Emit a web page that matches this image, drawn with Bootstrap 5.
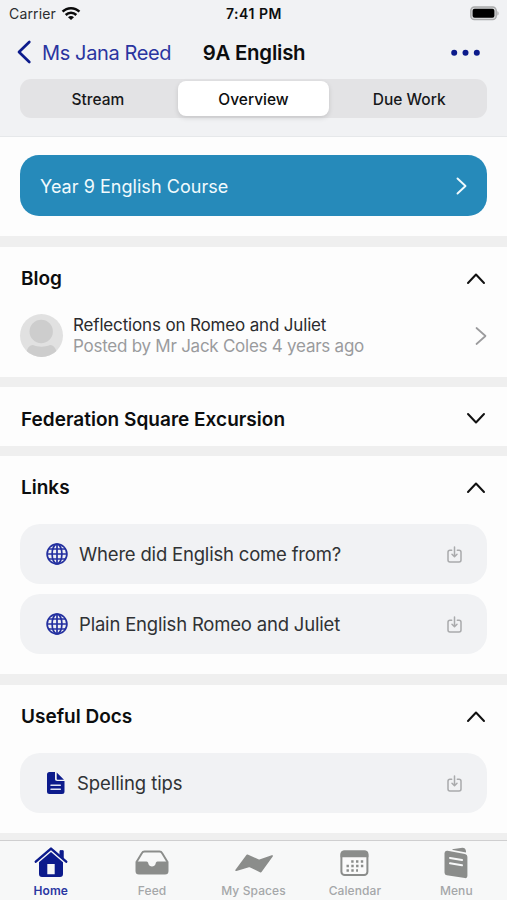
<!DOCTYPE html>
<html lang="en">
<head>
<meta charset="utf-8">
<meta name="viewport" content="width=device-width, initial-scale=1">
<title>9A English</title>
<link href="https://cdn.jsdelivr.net/npm/bootstrap@5.3.0/dist/css/bootstrap.min.css" rel="stylesheet">
<style>
  body { font-family: Inter, "Liberation Sans", sans-serif; background: #efefef; color: #0c0d0e; height: 900px; overflow: hidden; }
  svg { display: block; flex: none; overflow: visible; }
  .app-head { background: #f1f2f4; height: 137px; border-bottom: 1px solid #e6e8ea; }
  .status { height: 28px; padding: 0 8px 0 9px; font-size: 14px; line-height: 28px; }
  .status > div { flex: 1 1 0; }
  .carrier { letter-spacing: .15px; color: #2c2d30; }
  .wifi { margin-left: 5px; }
  .clock { font-weight: 600; letter-spacing: .55px; }
  .titlebar { height: 49px; padding: 0 17px; }
  .titlebar > .side { flex: 1 1 0; }
  .more { padding-right: 10px; }
  .back { color: #2a35a0; font-size: 20px; letter-spacing: -.38px; gap: 11px; }
  .title { font-size: 20.4px; font-weight: 600; letter-spacing: -.22px; margin: 0 4px 0 15px; padding-top: 1px; }
  .segment { display: grid; grid-template-columns: repeat(3, 1fr); height: 39px; margin: 2px 20px 0; border-radius: 11px; background: #e3e3e5; padding: 2px 0; font-size: 15.5px; font-weight: 500; }
  .segment .nav-link { color: #17181a; padding: 1px 0 0; line-height: 35px; border-radius: 8px; text-align: center; }
  .segment .nav-link.active { background: #fff; color: #0c0d0e; box-shadow: 0 2px 5px rgba(0,0,0,.13); margin: 0 2px; height: 35px; }
  .panel { background: #fdfdfd; padding: 0 20px; margin-bottom: 11px; }
  .course { height: 61px; margin-top: 18px; border-radius: 19px; background: #268aba; color: #f1fafd; font-size: 18px; letter-spacing: .04px; padding: 0 20px; }
  .course span { padding-top: 1px; }
  .course-panel { height: 99px; overflow: hidden; }
  .blog-panel { height: 130px; margin-bottom: 10px; }
  .fed-panel { height: 59px; margin-bottom: 10px; }
  .links-panel { height: 218px; }
  .docs-panel { height: 148px; margin-bottom: 7px; }
  .sec-head { height: 63px; padding: 0 2px 0 1px; }
  .sec-head h2 { font-size: 19px; font-weight: 600; margin: 0; padding-top: 2px; }
  .fed-panel h2 { padding-top: 3px; letter-spacing: .02px; }
  .post { height: 51px; gap: 10px; padding-right: 1px; }
  .post-text { font-size: 17px; line-height: 21px; color: #2a2b2d; letter-spacing: -.16px; }
  .post-by { color: #9a9b9d; letter-spacing: -.25px; }
  .item { height: 60px; border-radius: 20px; background: #f1f2f4; padding: 0 25px; font-size: 18.5px; color: #303235; gap: 11px; letter-spacing: -.19px; }
  .item + .item { margin-top: 10px; }
  .item span { padding-top: 2px; }
  .links-panel .sec-head, .docs-panel .sec-head { margin-bottom: 5px; }
  .item-doc { gap: 12px; letter-spacing: -.08px; }
  .tabs { height: 60px; background: #f7f8f8; border-top: 1px solid #cfcfd0; font-size: 12px; font-weight: 500; color: #a5a7a9; letter-spacing: .1px; }
  .tabs .tab { flex: 1 1 0; color: inherit; }
  .tabs .tab.active { color: #2b37a2; font-weight: 600; }
  .tab-icon { height: 40px; padding-top: 5px; }
  .tab-label { line-height: 20px; }
</style>
</head>
<body>
<header class="app-head">
  <div class="status d-flex align-items-center">
    <div class="d-flex align-items-center">
      <span class="carrier">Carrier</span>
      <svg class="wifi" width="20" height="14" viewBox="0 0 20 14"><g fill="none" stroke="#0a0a0a" stroke-width="2.500"><path d="M1.600 4.700C6.200.1 13.800.1 18.400 4.700"/><path d="M4.700 8c3-3 7.600-3 10.600 0"/></g><path d="M10 13 7 10.200c1.700-1.600 4.300-1.600 6 0z" fill="#0a0a0a"/></svg>
    </div>
    <div class="clock text-center">7:41 PM</div>
    <div class="d-flex justify-content-end">
      <svg width="29" height="14" viewBox="0 0 29 14"><rect x=".8" y="0" width="25.400" height="12.600" rx="3.600" fill="#d6d7d8" stroke="#a9aaab" stroke-width="1.400"/><rect x="2.600" y="1.800" width="21.800" height="9" rx="2" fill="#000"/><path d="M27.400 4.200v4.200c1.600-.5 1.600-3.700 0-4.200z" fill="#a9aaab"/></svg>
    </div>
  </div>
  <div class="titlebar d-flex align-items-center">
    <a class="side back d-flex align-items-center text-decoration-none text-nowrap" href="#">
      <svg width="14" height="23" viewBox="0 0 14 23"><path d="M12.300 1 2 11l10.300 10" fill="none" stroke="#0c1b8c" stroke-width="2.700" stroke-linecap="round" stroke-linejoin="round"/></svg>
      <span>Ms Jana Reed</span>
    </a>
    <div class="title text-nowrap">9A English</div>
    <div class="side more d-flex justify-content-end">
      <svg width="29" height="6" viewBox="0 0 29 6" fill="#0c1b8c"><circle cx="3.200" cy="2.800" r="3"/><circle cx="14.500" cy="2.800" r="3"/><circle cx="25.800" cy="2.800" r="3"/></svg>
    </div>
  </div>
  <nav class="segment">
    <a class="nav-link" href="#">Stream</a>
    <a class="nav-link active" href="#">Overview</a>
    <a class="nav-link" href="#">Due Work</a>
  </nav>
</header>

<main>
  <section class="panel course-panel">
    <div class="course d-flex align-items-center justify-content-between">
      <span>Year 9 English Course</span>
      <svg width="11" height="18" viewBox="0 0 11 18"><path d="m1.500 1.500 8 7.500-8 7.500" fill="none" stroke="#f1fafd" stroke-width="1.900" stroke-linecap="round" stroke-linejoin="round"/></svg>
    </div>
  </section>

  <section class="panel blog-panel">
    <div class="sec-head d-flex align-items-center justify-content-between">
      <h2>Blog</h2>
      <svg width="18" height="11" viewBox="0 0 18 11"><path d="m1 10 8-8.500 8 8.500" fill="none" stroke="#111" stroke-width="2" stroke-linecap="round" stroke-linejoin="round"/></svg>
    </div>
    <div class="post d-flex align-items-center">
      <svg width="43" height="43" viewBox="0 0 43 43"><defs><clipPath id="av"><circle cx="21.500" cy="21.500" r="21.500"/></clipPath></defs><circle cx="21.500" cy="21.500" r="21.500" fill="#e1e1e1"/><g clip-path="url(#av)"><circle cx="21.200" cy="17.500" r="11.700" fill="#cdcdcd"/><path d="M6 43c0-8 3-12 7-12 5 2.200 12 2.200 17 0 4 0 7 4 7 12z" fill="#cdcdcd"/></g></svg>
      <div class="post-text flex-grow-1">
        <div>Reflections on Romeo and Juliet</div>
        <div class="post-by">Posted by Mr Jack Coles 4 years ago</div>
      </div>
      <svg width="11" height="18" viewBox="0 0 11 18"><path d="m1.500 1 9 8-9 8" fill="none" stroke="#9b9b9d" stroke-width="1.700" stroke-linecap="round" stroke-linejoin="round"/></svg>
    </div>
  </section>

  <section class="panel fed-panel">
    <div class="sec-head d-flex align-items-center justify-content-between">
      <h2>Federation Square Excursion</h2>
      <svg width="18" height="11" viewBox="0 0 18 11"><path d="m1 1 8 8.500L17 1" fill="none" stroke="#111" stroke-width="2" stroke-linecap="round" stroke-linejoin="round"/></svg>
    </div>
  </section>

  <section class="panel links-panel">
    <div class="sec-head d-flex align-items-center justify-content-between">
      <h2>Links</h2>
      <svg width="18" height="11" viewBox="0 0 18 11"><path d="m1 10 8-8.500 8 8.500" fill="none" stroke="#111" stroke-width="2" stroke-linecap="round" stroke-linejoin="round"/></svg>
    </div>
    <a class="item d-flex align-items-center text-decoration-none" href="#">
      <svg width="23" height="22" viewBox="0 0 23 22"><g id="globe" fill="none" stroke="#2431a0" stroke-width="1.700"><circle cx="12" cy="11" r="9.900"/><ellipse cx="12" cy="11" rx="4.900" ry="9.900"/><path d="M12 1v20M2 11h20M3.500 6h17M3.500 16h17"/></g></svg>
      <span class="flex-grow-1">Where did English come from?</span>
      <svg width="15" height="17" viewBox="0 0 15 17"><g id="save" fill="none" stroke="#a9aaac" stroke-width="1.500" stroke-linecap="round" stroke-linejoin="round"><path d="M4.700 4.200H3A2 2 0 0 0 1 6.200V14a2 2 0 0 0 2 2h9a2 2 0 0 0 2-2V6.200a2 2 0 0 0-2-2h-1.700M7.500.9v9.600M5 8.300l2.500 2.400L10 8.300"/></g></svg>
    </a>
    <a class="item d-flex align-items-center text-decoration-none" href="#">
      <svg width="23" height="22" viewBox="0 0 23 22"><use href="#globe"/></svg>
      <span class="flex-grow-1">Plain English Romeo and Juliet</span>
      <svg width="15" height="17" viewBox="0 0 15 17"><use href="#save"/></svg>
    </a>
  </section>

  <section class="panel docs-panel">
    <div class="sec-head d-flex align-items-center justify-content-between">
      <h2>Useful Docs</h2>
      <svg width="18" height="11" viewBox="0 0 18 11"><path d="m1 10 8-8.500 8 8.500" fill="none" stroke="#111" stroke-width="2" stroke-linecap="round" stroke-linejoin="round"/></svg>
    </div>
    <a class="item item-doc d-flex align-items-center text-decoration-none" href="#">
      <svg width="20" height="22" viewBox="0 0 20 22"><path d="M4.500 0H10v6.500A2.300 2.300 0 0 0 12.300 9H19.500v10.500a2.500 2.500 0 0 1-2.500 2.500H4.500A2.500 2.500 0 0 1 2 19.500v-17A2.500 2.500 0 0 1 4.500 0zM11.700.5 19 7.700h-6.300a1 1 0 0 1-1-1z" fill="#0c1b8c"/><path d="M6 13.200h9.300M6 17.300h9.300" stroke="#dfe3f3" stroke-width="1.500" stroke-linecap="round"/></svg>
      <span class="flex-grow-1">Spelling tips</span>
      <svg width="15" height="17" viewBox="0 0 15 17"><use href="#save"/></svg>
    </a>
  </section>
</main>

<footer class="tabs d-flex text-center">
  <a class="tab active text-decoration-none" href="#">
    <div class="tab-icon d-flex justify-content-center">
      <svg width="34" height="32" viewBox="0 0 34 32"><path d="m1.800 15.600 15.200-13 15.200 13" fill="none" stroke="#0c1b8c" stroke-width="2.500" stroke-linecap="round" stroke-linejoin="round"/><path d="M26 9.500V4.700h3.200v7.500" fill="#0c1b8c" stroke="#0c1b8c" stroke-linejoin="round"/><path fill-rule="evenodd" d="M17 5.900 29 16.200V28a3 3 0 0 1-3 3H8a3 3 0 0 1-3-3V16.200zM13.300 18v10.300h7.400V18z" fill="#0c1b8c"/></svg>
    </div>
    <div class="tab-label">Home</div>
  </a>
  <a class="tab text-decoration-none" href="#">
    <div class="tab-icon d-flex justify-content-center">
      <svg width="34" height="32" viewBox="0 0 34 32"><path d="M1.500 16 6.800 7.200Q7.700 5.500 9.500 5.500h15q1.800 0 2.700 1.700L32.500 16" fill="none" stroke="#8b8d8b" stroke-width="1.900"/><path d="M.5 15.600h11c1.300 0 1.600 1 1.900 2.200.8 3.700 6.400 3.700 7.200 0 .3-1.200.6-2.200 1.900-2.200h11v9.500a3.500 3.500 0 0 1-3.500 3.500H4a3.500 3.500 0 0 1-3.500-3.500z" fill="#8b8d8b"/></svg>
    </div>
    <div class="tab-label">Feed</div>
  </a>
  <a class="tab text-decoration-none" href="#">
    <div class="tab-icon d-flex justify-content-center">
      <svg width="38" height="32" viewBox="0 0 38 32"><path d="M1.200 24.200 12.300 9.300l11.700 5.200L37 10 25.800 25.600 14.500 20.200z" fill="#8b8d8b" stroke="#8b8d8b" stroke-width="1.800" stroke-linejoin="round"/></svg>
    </div>
    <div class="tab-label">My Spaces</div>
  </a>
  <a class="tab text-decoration-none" href="#">
    <div class="tab-icon d-flex justify-content-center">
      <svg width="29" height="32" viewBox="0 0 29 32"><rect x="1.400" y="5.600" width="26" height="23.500" rx="3.300" fill="#fafafa" stroke="#8b8d8b" stroke-width="2"/><path d="M.5 11.200V8a3.500 3.500 0 0 1 3.500-3.500h21A3.500 3.500 0 0 1 28.400 8v3.200z" fill="#8b8d8b"/><path d="M11.200 15.500h12.500M6.500 20h17.500M6.500 24.500h11.500" stroke="#8b8d8b" stroke-width="2.300" stroke-dasharray="2.400 2.400"/></svg>
    </div>
    <div class="tab-label">Calendar</div>
  </a>
  <a class="tab text-decoration-none" href="#">
    <div class="tab-icon d-flex justify-content-center">
      <svg width="24" height="32" viewBox="0 0 24 32"><path d="M8 3.200 18.500 1.800Q21.500 1.800 22 5.200V6.500L9 4z" fill="#8b8d8b"/><path d="M3.600 4.800 21 8q2.400.5 2.400 2.800V30q0 2.500-2.500 2.100L2.800 29.300Q.5 28.900.5 26.500V7.300Q.5 4.300 3.600 4.800z" fill="#8b8d8b"/><path d="M6 12 18 14M6 17.300 18 19.300" stroke="#f7f8f8" stroke-width="2" stroke-linecap="round"/></svg>
    </div>
    <div class="tab-label">Menu</div>
  </a>
</footer>
<script src="https://cdn.jsdelivr.net/npm/bootstrap@5.3.0/dist/js/bootstrap.bundle.min.js"></script>
</body>
</html>
